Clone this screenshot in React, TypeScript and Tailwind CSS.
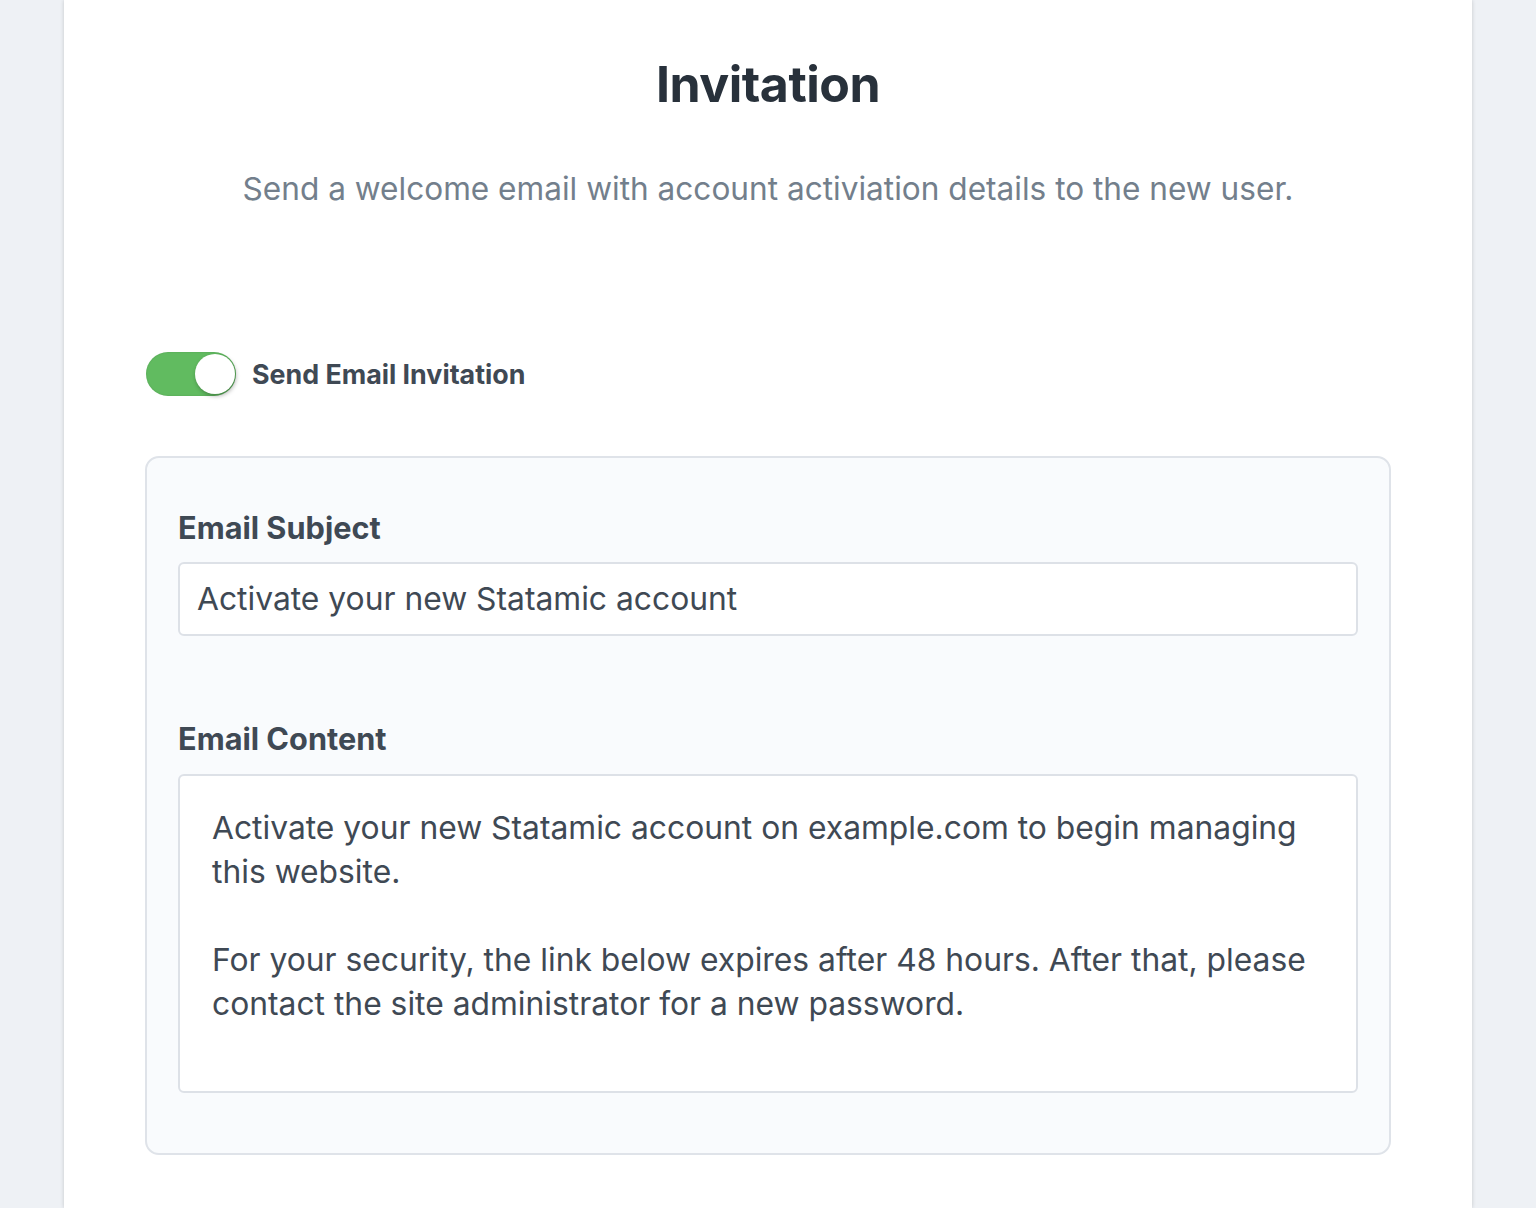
export default function App() {
  return (
    <div
      className="min-h-[1208px] bg-[#eef1f5] px-[64px] text-[#3f4954]"
      style={{ fontFamily: "Inter, 'Noto Sans', sans-serif" }}
    >
      <div className="min-h-[1208px] bg-white shadow-[0_0_4px_rgba(0,0,0,0.18)] pt-[54px] pb-[40px] px-[81px]">
        {/* Header */}
        <h1 className="text-center text-[50px] leading-[60px] font-bold text-[#28313b] tracking-[-0.01em]">
          Invitation
        </h1>
        <p className="mt-[55px] text-center text-[31.6px] leading-[40px] text-[#737f8c]">
          Send a welcome email with account activiation details to the new user.
        </p>

        {/* Toggle */}
        <div className="mt-[143px] flex items-center gap-[16px]">
          <div className="ml-[1px] relative h-[44px] w-[90px] rounded-full bg-[#61bb60] shadow-[inset_0_0_2px_rgba(0,0,0,0.15)]">
            <div className="absolute right-[1px] top-[2px] h-[40px] w-[40px] rounded-full bg-white shadow-[1px_2px_4px_rgba(0,0,0,0.3)]" />
          </div>
          <span className="text-[26.8px] leading-[36px] font-bold text-[#3f4954]">
            Send Email Invitation
          </span>
        </div>

        {/* Fields */}
        <div className="mt-[60px] rounded-[14px] border-2 border-[#dfe3e9] bg-[#f9fbfd] px-[31px] pt-[50px] pb-[60px]">
          <label className="block text-[30.7px] leading-[40px] font-bold text-[#3f4954]">
            Email Subject
          </label>
          <div className="mt-[14px] h-[74px] rounded-[6px] border-2 border-[#dde1e7] bg-white px-[17px] flex items-center text-[31.8px] text-[#3f4954]">
            Activate your new Statamic account
          </div>

          <label className="mt-[83px] block text-[30.7px] leading-[40px] font-bold text-[#3f4954]">
            Email Content
          </label>
          <div className="mt-[15px] h-[319px] rounded-[6px] border-2 border-[#dde1e7] bg-white pl-[32px] pr-[40px] pt-[30px] text-[31.8px] leading-[44px] text-[#3f4954]">
            <p>
              Activate your new Statamic account on example.com to begin managing this website.
            </p>
            <p className="mt-[44px]">
              For your security, the link below expires after 48 hours. After that, please contact
              the site administrator for a new password.
            </p>
          </div>
        </div>
      </div>
    </div>
  );
}
